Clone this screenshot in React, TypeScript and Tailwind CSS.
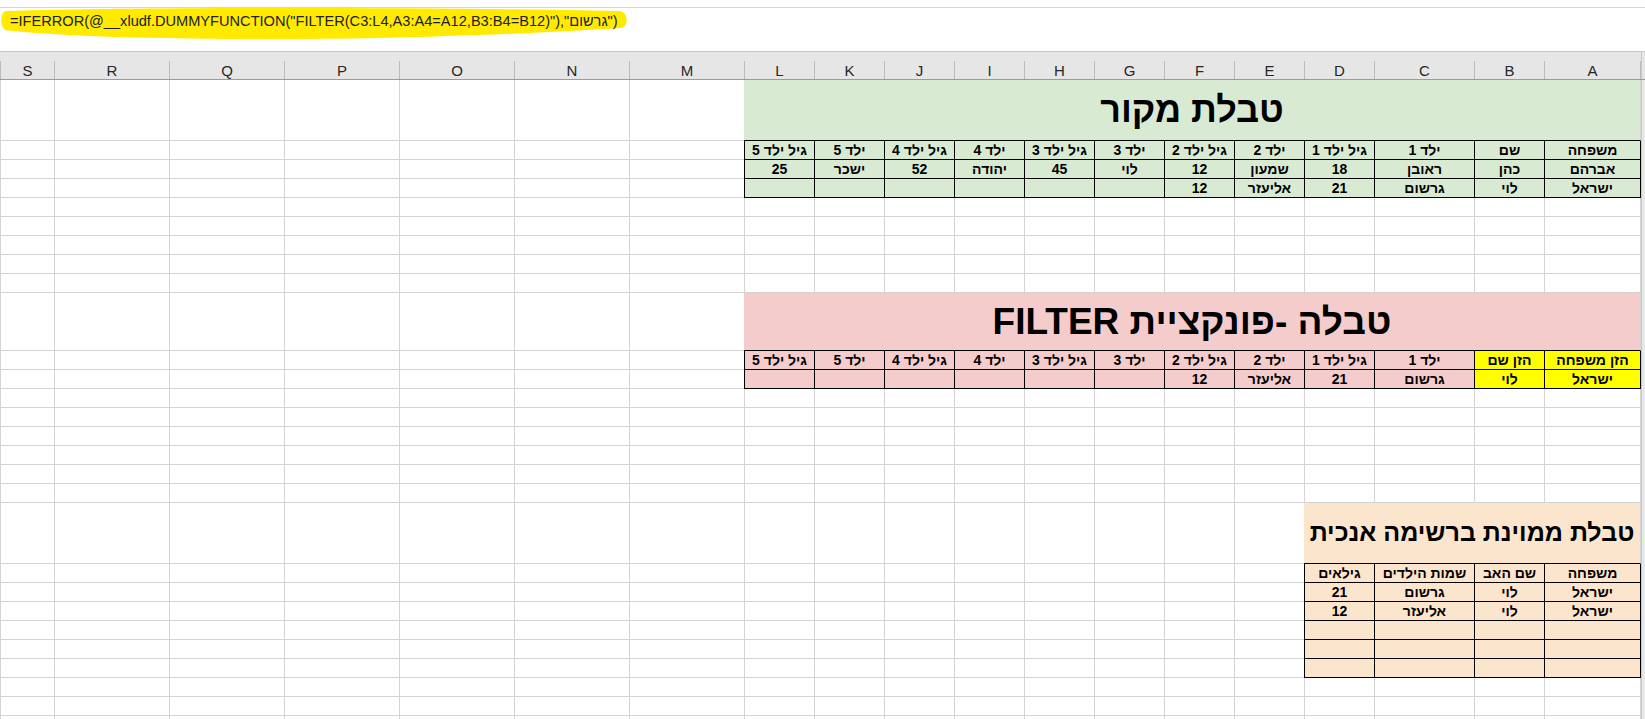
import React from "react";

type Col = { key: string; w: string };

const cols: Col[] = [
  { key: "A", w: "w-[97px] border-r" },
  { key: "B", w: "w-[70px]" },
  { key: "C", w: "w-[100px]" },
  { key: "D", w: "w-[70px]" },
  { key: "E", w: "w-[70px]" },
  { key: "F", w: "w-[70px]" },
  { key: "G", w: "w-[70px]" },
  { key: "H", w: "w-[70px]" },
  { key: "I", w: "w-[70px]" },
  { key: "J", w: "w-[70px]" },
  { key: "K", w: "w-[70px]" },
  { key: "L", w: "w-[70px]" },
  { key: "M", w: "w-[115px]" },
  { key: "N", w: "w-[115px]" },
  { key: "O", w: "w-[115px]" },
  { key: "P", w: "w-[115px]" },
  { key: "Q", w: "w-[115px]" },
  { key: "R", w: "w-[115px]" },
  { key: "S", w: "w-[54px]" },
];

const kidsHeader = ["ילד 1", "גיל ילד 1", "ילד 2", "גיל ילד 2", "ילד 3", "גיל ילד 3", "ילד 4", "גיל ילד 4", "ילד 5", "גיל ילד 5"];

const Strip = () => <div className="w-[4px] h-full shrink-0 bg-[#e8e8e8] border-l border-[#c8c8c8]" />;

const GrayCells = ({ from }: { from: number }) => (
  <>
    {cols.slice(from).map((c) => (
      <div key={c.key} className={`${c.w} h-full shrink-0 border-l border-b border-[#d4d4d4]`} />
    ))}
  </>
);

const PlainRow = () => (
  <div className="flex h-[19px]">
    <Strip />
    <GrayCells from={0} />
  </div>
);

const TitleRow = ({ span, width, bg, h, size, text }: { span: number; width: string; bg: string; h: string; size: string; text: string }) => (
  <div className={`flex ${h}`}>
    <Strip />
    <div className={`${width} ${bg} ${size} h-full shrink-0 border-r border-r-[#d4d4d4] border-b border-b-black flex items-center justify-center font-bold text-black whitespace-nowrap`}>
      {text}
    </div>
    <GrayCells from={span} />
  </div>
);

const TableRow = ({ cells, bg, yellow = false }: { cells: string[]; bg: string; yellow?: boolean }) => (
  <div className="flex h-[19px]">
    <Strip />
    {cells.map((t, i) => (
      <div
        key={i}
        className={`${cols[i].w} ${yellow && i < 2 ? "bg-[#ffff00]" : bg} h-full shrink-0 border-l border-b border-black flex items-center justify-center text-[14px] font-bold leading-none text-black whitespace-nowrap`}
      >
        {t}
      </div>
    ))}
    <GrayCells from={cells.length} />
  </div>
);

const empty12 = (first: string[]) => [...first, ...Array(12 - first.length).fill("")];

export default function App() {
  return (
    <div className="w-[1645px] h-[719px] overflow-hidden bg-white font-['Liberation_Sans',Arial,sans-serif]">
      {/* formula bar */}
      <div className="h-[51px] pt-[7px]">
        <div className="relative h-[44px] border-t border-[#d6d6d6]">
          <svg className="absolute left-0 top-0" width="640" height="44" viewBox="0 0 640 44">
            <path
              d="M5,3 C150,-1 400,-1 620,3 C628,5 629,17 622,20 C560,24 470,28 380,30 C280,32 170,31 90,28 C50,26 20,24 5,22 C0,18 0,6 5,3 Z"
              fill="#ffea00"
            />
          </svg>
          <div dir="ltr" className="relative pl-[10px] pt-[5px] text-[14.6px] leading-[17px] text-[#202020] whitespace-nowrap">
            =IFERROR(@__xludf.DUMMYFUNCTION("FILTER(C3:L4,A3:A4=A12,B3:B4=B12)"),"גרשום")
          </div>
        </div>
      </div>

      <div dir="rtl">
        {/* column headers */}
        <div className="flex items-end h-[29px] bg-[#e6e6e6] border-t border-b border-t-[#c6c6c6] border-b-[#9c9c9c]">
          <div className="w-[4px] h-full shrink-0 border-l border-[#c8c8c8]" />
          {cols.map((c) => (
            <div key={c.key} className={`${c.w} h-[18px] shrink-0 border-l border-[#bcbcbc] flex items-center justify-center text-[15px] leading-none text-[#262626]`}>
              {c.key}
            </div>
          ))}
        </div>

        <TitleRow span={12} width="w-[897px]" bg="bg-[#d9ead3]" h="h-[61px]" size="text-[36px]" text="טבלת מקור" />
        <TableRow bg="bg-[#d9ead3]" cells={["משפחה", "שם", ...kidsHeader]} />
        <TableRow bg="bg-[#d9ead3]" cells={["אברהם", "כהן", "ראובן", "18", "שמעון", "12", "לוי", "45", "יהודה", "52", "ישכר", "25"]} />
        <TableRow bg="bg-[#d9ead3]" cells={empty12(["ישראל", "לוי", "גרשום", "21", "אליעזר", "12"])} />
        <PlainRow />
        <PlainRow />
        <PlainRow />
        <PlainRow />
        <PlainRow />

        <TitleRow span={12} width="w-[897px]" bg="bg-[#f4cccc]" h="h-[58px]" size="text-[37px]" text="טבלה -פונקציית FILTER" />
        <TableRow bg="bg-[#f4cccc]" yellow cells={["הזן משפחה", "הזן שם", ...kidsHeader]} />
        <TableRow bg="bg-[#f4cccc]" yellow cells={empty12(["ישראל", "לוי", "גרשום", "21", "אליעזר", "12"])} />
        <PlainRow />
        <PlainRow />
        <PlainRow />
        <PlainRow />
        <PlainRow />
        <PlainRow />

        <TitleRow span={4} width="w-[337px]" bg="bg-[#fce5cd]" h="h-[61px]" size="text-[25px]" text="טבלת ממוינת ברשימה אנכית" />
        <TableRow bg="bg-[#fce5cd]" cells={["משפחה", "שם האב", "שמות הילדים", "גילאים"]} />
        <TableRow bg="bg-[#fce5cd]" cells={["ישראל", "לוי", "גרשום", "21"]} />
        <TableRow bg="bg-[#fce5cd]" cells={["ישראל", "לוי", "אליעזר", "12"]} />
        <TableRow bg="bg-[#fce5cd]" cells={["", "", "", ""]} />
        <TableRow bg="bg-[#fce5cd]" cells={["", "", "", ""]} />
        <TableRow bg="bg-[#fce5cd]" cells={["", "", "", ""]} />
        <PlainRow />
        <PlainRow />
        <PlainRow />
      </div>
    </div>
  );
}
